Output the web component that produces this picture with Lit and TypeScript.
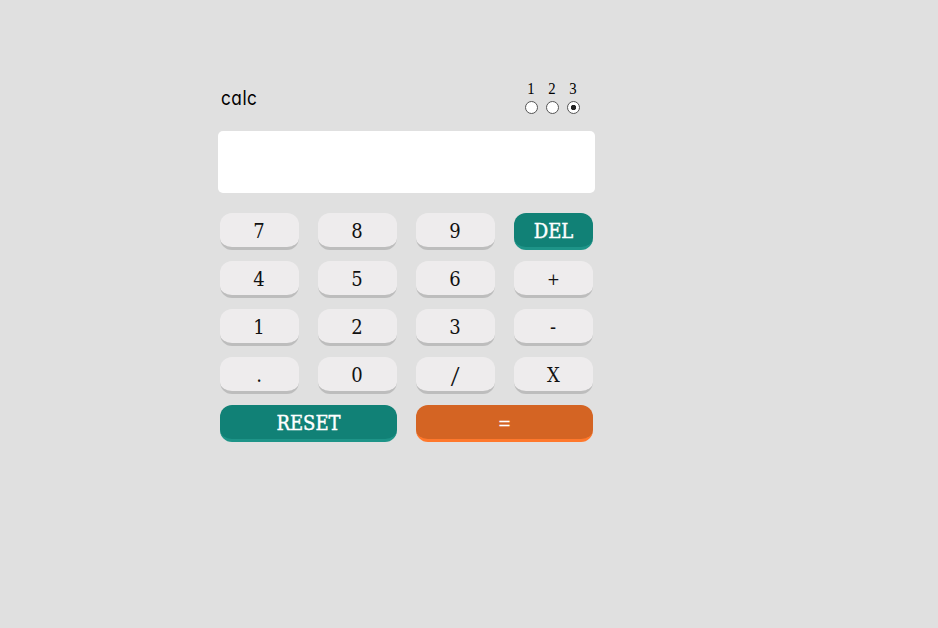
import { LitElement, html, css } from "lit";
import { customElement, state } from "lit/decorators.js";

const KEYS = ["7", "8", "9", "DEL", "4", "5", "6", "+", "1", "2", "3", "-", ".", "0", "/", "X", "RESET", "="];
const KIND: Record<string, string> = { DEL: "teal", RESET: "teal wide", "=": "orange wide", "/": "slash", "+": "plus", X: "times" };

@customElement("app-root")
export class AppRoot extends LitElement {
  @state() private theme = 3;

  static styles = css`
    :host { display: block; height: 100vh; background: #e0e0e0; overflow: hidden; }
    .calc { width: 377px; margin-left: 218px; padding-top: 80px; }
    header { display: flex; justify-content: space-between; height: 51px; padding: 0 15px 0 2px; box-sizing: border-box; }
    h1 {
      margin: 5px 0 0 1px; font: 400 20px/26px Inter, "Open Sans", sans-serif;
      font-feature-settings: "cv11" 1; color: #000; letter-spacing: 0.6px;
      transform: scaleX(0.86); transform-origin: 0 50%;
    }
    .themes { display: flex; gap: 8px; }
    label { display: flex; flex-direction: column; align-items: center; width: 13px; font: 16px/18px "Liberation Serif", serif; color: #000; }
    .number { margin-left: -2px; transform: scaleX(0.92); }
    input {
      appearance: none; margin: 3px 0 0; width: 13px; height: 13px; box-sizing: border-box;
      border: 1px solid #555; border-radius: 50%; background: #fff;
    }
    input:checked { background: radial-gradient(circle, #222 0 2.4px, #fff 3px); }
    .display { height: 62px; border-radius: 5px; background: #fff; }
    .keys { display: grid; grid-template-columns: repeat(4, 79px); gap: 11px 19px; margin: 20px 2px 0; }
    button {
      height: 37px; box-sizing: border-box; margin: 0; padding: 1px 1px 0 0; border: 0;
      border-bottom: 3px solid #bdbdbd; border-radius: 12px; background: #eeeced; color: #111;
      font: 400 20px/32px "DejaVu Serif Condensed", "DejaVu Serif", serif; font-stretch: condensed;
    }
    .teal { background: #118176; border-color: #1e9488; color: #fff; padding-right: 0; -webkit-text-stroke: 0.4px #fff; }
    .orange { background: #d46423; border-color: #ff782c; color: #fff; font-size: 18px; padding: 3px 0 0; }
    .wide { grid-column: span 2; }
    .slash { font-family: "Liberation Serif", serif; font-size: 30px; padding: 3px 0 0; }
    .slash span { display: inline-block; transform: scaleX(1.05); }
    .plus { font-size: 17px; padding: 1px 0 0; }
    .times { padding-right: 0; }
  `;

  render() {
    return html`
      <main class="calc">
        <header>
          <h1>calc</h1>
          <div class="themes">
            ${[1, 2, 3].map((n) => html`
              <label><span class="number">${n}</span>
                <input type="radio" name="theme" .checked=${this.theme === n} @change=${() => (this.theme = n)} />
              </label>`)}
          </div>
        </header>
        <div class="display"></div>
        <div class="keys">${KEYS.map((k) => html`<button class=${KIND[k] ?? "plain"}><span>${k}</span></button>`)}</div>
      </main>`;
  }
}
